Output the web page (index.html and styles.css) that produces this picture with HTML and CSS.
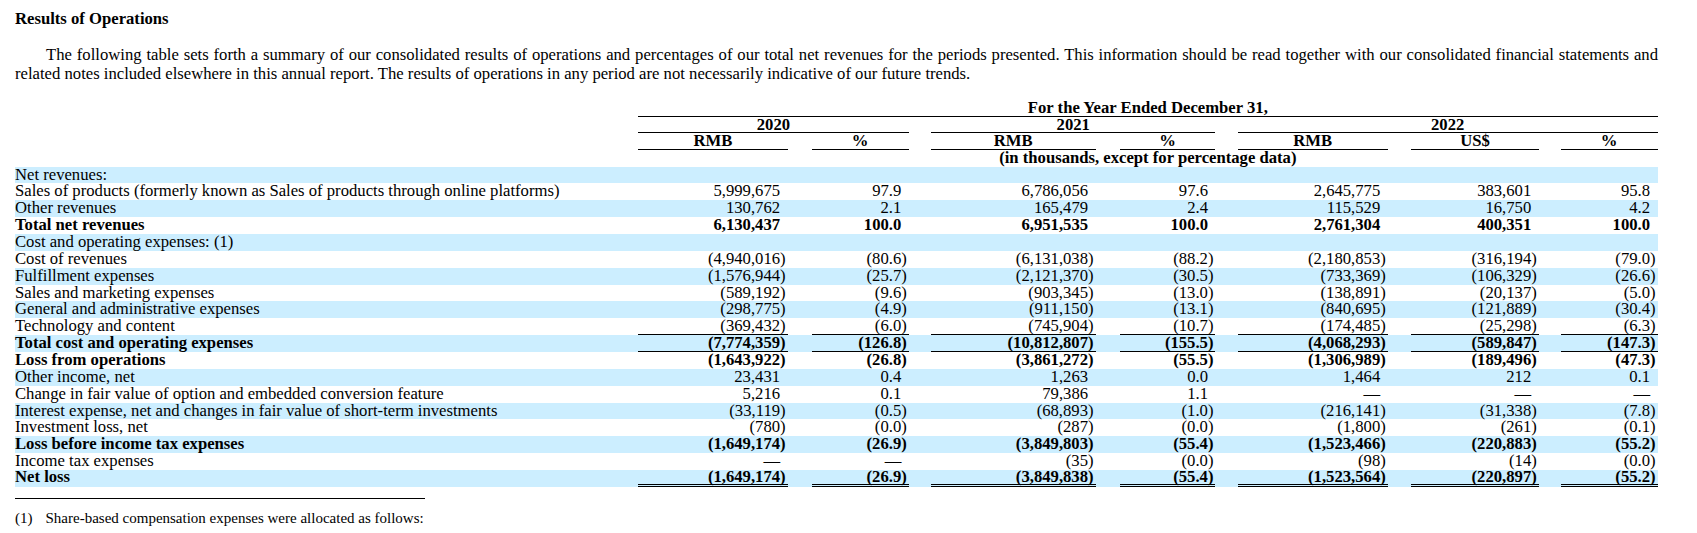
FILE: index.html
```html
<!DOCTYPE html>
<html lang="en">
<head>
<meta charset="utf-8">
<title>Results of Operations</title>
<link rel="stylesheet" href="styles.css">
</head>
<body>
<div class="page">
  <p class="title">Results of Operations</p>
  <p class="intro">The following table sets forth a summary of our consolidated results of operations and percentages of our total net revenues for the periods presented. This information should be read together with our consolidated financial statements and related notes included elsewhere in this annual report. The results of operations in any period are not necessarily indicative of our future trends.</p>
  <table class="ops">
    <colgroup>
      <col class="c-lbl"><col class="c-r20"><col class="g-a"><col class="c-p20"><col class="g-b">
      <col class="c-r21"><col class="g-a"><col class="c-p21"><col class="g-b">
      <col class="c-r22"><col class="g-c"><col class="c-us"><col class="g-d"><col class="c-p22">
    </colgroup>
    <thead>
      <tr class="h">
        <td></td>
        <td colspan="13" class="hc ul">For the Year Ended December 31,</td>
      </tr>
      <tr class="h">
        <td></td>
        <td colspan="3" class="hc ul">2020</td><td></td>
        <td colspan="3" class="hc ul">2021</td><td></td>
        <td colspan="5" class="hc ul">2022</td>
      </tr>
      <tr class="h">
        <td></td>
        <td class="hc ul">RMB</td><td></td><td class="hc ul">%</td><td></td>
        <td class="hc ul">RMB</td><td></td><td class="hc ul">%</td><td></td>
        <td class="hc ul">RMB</td><td></td><td class="hc ul">US$</td><td></td><td class="hc ul">%</td>
      </tr>
      <tr class="h">
        <td></td>
        <td colspan="13" class="hc">(in thousands, except for percentage data)</td>
      </tr>
    </thead>
    <tbody>
      <tr><td>Net revenues:</td><td></td><td></td><td></td><td></td><td></td><td></td><td></td><td></td><td></td><td></td><td></td><td></td><td></td></tr>
      <tr><td>Sales of products (formerly known as Sales of products through online platforms)</td><td class="n p">5,999,675</td><td></td><td class="n p">97.9</td><td></td><td class="n p">6,786,056</td><td></td><td class="n p">97.6</td><td></td><td class="n p">2,645,775</td><td></td><td class="n p">383,601</td><td></td><td class="n p">95.8</td></tr>
      <tr><td>Other revenues</td><td class="n p">130,762</td><td></td><td class="n p">2.1</td><td></td><td class="n p">165,479</td><td></td><td class="n p">2.4</td><td></td><td class="n p">115,529</td><td></td><td class="n p">16,750</td><td></td><td class="n p">4.2</td></tr>
      <tr class="b"><td>Total net revenues</td><td class="n p">6,130,437</td><td></td><td class="n p">100.0</td><td></td><td class="n p">6,951,535</td><td></td><td class="n p">100.0</td><td></td><td class="n p">2,761,304</td><td></td><td class="n p">400,351</td><td></td><td class="n p">100.0</td></tr>
      <tr><td>Cost and operating expenses: (1)</td><td></td><td></td><td></td><td></td><td></td><td></td><td></td><td></td><td></td><td></td><td></td><td></td><td></td></tr>
      <tr><td>Cost of revenues</td><td class="n">(4,940,016)</td><td></td><td class="n">(80.6)</td><td></td><td class="n">(6,131,038)</td><td></td><td class="n">(88.2)</td><td></td><td class="n">(2,180,853)</td><td></td><td class="n">(316,194)</td><td></td><td class="n">(79.0)</td></tr>
      <tr><td>Fulfillment expenses</td><td class="n">(1,576,944)</td><td></td><td class="n">(25.7)</td><td></td><td class="n">(2,121,370)</td><td></td><td class="n">(30.5)</td><td></td><td class="n">(733,369)</td><td></td><td class="n">(106,329)</td><td></td><td class="n">(26.6)</td></tr>
      <tr><td>Sales and marketing expenses</td><td class="n">(589,192)</td><td></td><td class="n">(9.6)</td><td></td><td class="n">(903,345)</td><td></td><td class="n">(13.0)</td><td></td><td class="n">(138,891)</td><td></td><td class="n">(20,137)</td><td></td><td class="n">(5.0)</td></tr>
      <tr><td>General and administrative expenses</td><td class="n">(298,775)</td><td></td><td class="n">(4.9)</td><td></td><td class="n">(911,150)</td><td></td><td class="n">(13.1)</td><td></td><td class="n">(840,695)</td><td></td><td class="n">(121,889)</td><td></td><td class="n">(30.4)</td></tr>
      <tr class="ul-row"><td>Technology and content</td><td class="n">(369,432)</td><td></td><td class="n">(6.0)</td><td></td><td class="n">(745,904)</td><td></td><td class="n">(10.7)</td><td></td><td class="n">(174,485)</td><td></td><td class="n">(25,298)</td><td></td><td class="n">(6.3)</td></tr>
      <tr class="b ul-row"><td>Total cost and operating expenses</td><td class="n">(7,774,359)</td><td></td><td class="n">(126.8)</td><td></td><td class="n">(10,812,807)</td><td></td><td class="n">(155.5)</td><td></td><td class="n">(4,068,293)</td><td></td><td class="n">(589,847)</td><td></td><td class="n">(147.3)</td></tr>
      <tr class="b"><td>Loss from operations</td><td class="n">(1,643,922)</td><td></td><td class="n">(26.8)</td><td></td><td class="n">(3,861,272)</td><td></td><td class="n">(55.5)</td><td></td><td class="n">(1,306,989)</td><td></td><td class="n">(189,496)</td><td></td><td class="n">(47.3)</td></tr>
      <tr><td>Other income, net</td><td class="n p">23,431</td><td></td><td class="n p">0.4</td><td></td><td class="n p">1,263</td><td></td><td class="n p">0.0</td><td></td><td class="n p">1,464</td><td></td><td class="n p">212</td><td></td><td class="n p">0.1</td></tr>
      <tr><td>Change in fair value of option and embedded conversion feature</td><td class="n p">5,216</td><td></td><td class="n p">0.1</td><td></td><td class="n p">79,386</td><td></td><td class="n p">1.1</td><td></td><td class="n p">—</td><td></td><td class="n p">—</td><td></td><td class="n p">—</td></tr>
      <tr><td>Interest expense, net and changes in fair value of short-term investments</td><td class="n">(33,119)</td><td></td><td class="n">(0.5)</td><td></td><td class="n">(68,893)</td><td></td><td class="n">(1.0)</td><td></td><td class="n">(216,141)</td><td></td><td class="n">(31,338)</td><td></td><td class="n">(7.8)</td></tr>
      <tr><td>Investment loss, net</td><td class="n">(780)</td><td></td><td class="n">(0.0)</td><td></td><td class="n">(287)</td><td></td><td class="n">(0.0)</td><td></td><td class="n">(1,800)</td><td></td><td class="n">(261)</td><td></td><td class="n">(0.1)</td></tr>
      <tr class="b"><td>Loss before income tax expenses</td><td class="n">(1,649,174)</td><td></td><td class="n">(26.9)</td><td></td><td class="n">(3,849,803)</td><td></td><td class="n">(55.4)</td><td></td><td class="n">(1,523,466)</td><td></td><td class="n">(220,883)</td><td></td><td class="n">(55.2)</td></tr>
      <tr><td>Income tax expenses</td><td class="n p">—</td><td></td><td class="n p">—</td><td></td><td class="n">(35)</td><td></td><td class="n">(0.0)</td><td></td><td class="n">(98)</td><td></td><td class="n">(14)</td><td></td><td class="n">(0.0)</td></tr>
      <tr class="b dbl-row"><td>Net loss</td><td class="n">(1,649,174)</td><td></td><td class="n">(26.9)</td><td></td><td class="n">(3,849,838)</td><td></td><td class="n">(55.4)</td><td></td><td class="n">(1,523,564)</td><td></td><td class="n">(220,897)</td><td></td><td class="n">(55.2)</td></tr>
    </tbody>
  </table>
  <div class="rule"></div>
  <div class="note">
    <span class="note-num">(1)</span>
    <span class="note-text">Share-based compensation expenses were allocated as follows:</span>
  </div>
</div>
</body>
</html>
```

FILE: styles.css
```css
html, body {
  margin: 0;
  padding: 0;
  background: #ffffff;
}

body {
  font-family: "Liberation Serif", "Times New Roman", serif;
  color: #000000;
}

.page {
  padding: 9px 0 0 15px;
  width: 1643px;
}

.title {
  margin: 0 0 16.8px;
  font-size: 16.67px;
  line-height: 19.15px;
  font-weight: bold;
}

.intro {
  margin: 0 0 16.7px;
  font-size: 16.67px;
  line-height: 19.15px;
  text-indent: 31px;
  text-align: justify;
}

.ops {
  width: 1642.6px;
  table-layout: fixed;
  border-collapse: separate;
  border-spacing: 0;
  font-size: 16.67px;
}

.c-lbl { width: 623px; }
.c-r20 { width: 149.5px; }
.c-p20 { width: 97.2px; }
.c-r21 { width: 164.6px; }
.c-p21 { width: 95.9px; }
.c-r22 { width: 150.1px; }
.c-us  { width: 127.3px; }
.c-p22 { width: 96.7px; }
.g-a { width: 24px; }
.g-b { width: 22.2px; }
.g-c { width: 23.7px; }
.g-d { width: 22px; }

.ops td {
  padding: 0;
  line-height: 15px;
  vertical-align: top;
  white-space: nowrap;
  overflow: visible;
}

.ops tr.h {
  height: 16.67px;
}

.ops tbody tr {
  height: 16.87px;
}

.ops tbody tr:nth-child(odd) {
  background: #cceeff;
}

.hc {
  text-align: center;
  font-weight: bold;
}

.ul {
  border-bottom: 1px solid #000000;
}

.n {
  text-align: right;
  padding-right: 2px !important;
}

.n.p {
  padding-right: 7.5px !important;
}

.b td {
  font-weight: bold;
}

.ul-row td.n {
  border-bottom: 1px solid #000000;
}

.dbl-row td {
  line-height: 13.87px;
}

.dbl-row td.n {
  border-bottom: 3px double #000000;
}

.rule {
  width: 410px;
  height: 0;
  border-top: 1px solid #000000;
  margin-top: 11.5px;
}

.note {
  display: flex;
  margin-top: 10.5px;
  font-size: 15px;
  line-height: 17.25px;
}

.note-num {
  width: 30.5px;
  flex: none;
}
```
